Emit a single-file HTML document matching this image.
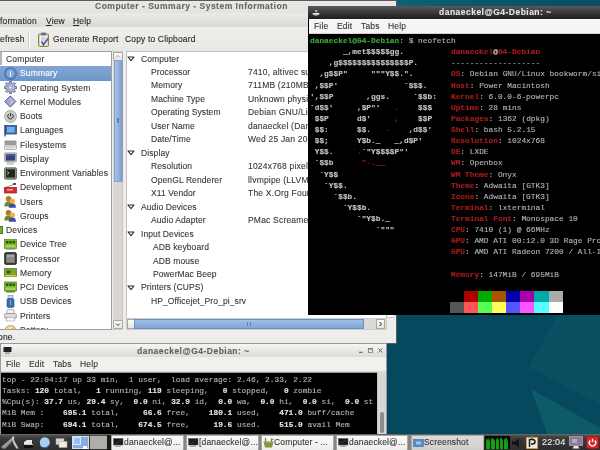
<!DOCTYPE html><html><head><meta charset="utf-8"><style>*{margin:0;padding:0;box-sizing:border-box}
html,body{width:600px;height:450px;overflow:hidden;background:#06495e;font-family:"Liberation Sans",sans-serif;font-size:8.5px;letter-spacing:0.15px;color:#2e3436;position:relative}
.a{position:absolute}
.a svg{display:block}
.t{position:absolute;white-space:pre;line-height:10px;will-change:transform;-webkit-text-stroke:0.1px currentColor}
.m{position:absolute;white-space:pre;font-family:"Liberation Mono",monospace;font-size:7.83px;letter-spacing:0;line-height:11.13px;will-change:transform;-webkit-text-stroke:0.12px currentColor}
</style></head><body>
<svg class="a" style="left:0;top:0" width="600" height="450">
 <rect width="600" height="450" fill="#06495e"/>
 <defs><linearGradient id="tg" x1="0" x2="1" y1="0" y2="0"><stop offset="0" stop-color="#0b6373"/><stop offset="0.5" stop-color="#0a5669"/><stop offset="1" stop-color="#094d63"/></linearGradient></defs>
 <rect x="396" y="0" width="204" height="7" fill="url(#tg)"/>
 <polygon points="529,367 566,300 600,300 600,404" fill="#0a5063"/>
 <polygon points="531,389 600,428 600,450 553,450" fill="#0d5b69"/>
</svg>
<div class="a" style="left:0;top:0;width:397px;height:344px;background:#5a5a5a"></div>
<div class="a" style="left:0;top:1px;width:396px;height:342px;background:#eeedeb"></div>
<div class="a" style="left:386px;top:300px;width:9px;height:18px;background:#fff;border:1px solid #c8c6c2;border-radius:2px"></div>
<div class="a" style="left:0;top:1px;width:396px;height:12px;background:linear-gradient(#e9e8e5,#e3e2df)"></div>
<div class="t" style="left:94.6px;top:0.60px;font-weight:bold;color:#66655f;letter-spacing:0.5px">Computer - Summary - System Information</div>
<div class="a" style="left:0;top:13px;width:396px;height:14px;background:linear-gradient(#eceae7,#dcdad6)"></div>
<div class="t" style="left:0px;top:15.70px;color:#262626">formation</div>
<div class="t" style="left:45.7px;top:15.7px;color:#262626"><u style="text-decoration-thickness:0.8px;text-underline-offset:1px">V</u>iew</div>
<div class="t" style="left:73px;top:15.7px;color:#262626"><u style="text-decoration-thickness:0.8px;text-underline-offset:1px">H</u>elp</div>
<div class="a" style="left:0;top:27px;width:396px;height:24px;background:linear-gradient(#efeeec,#e9e8e5)"></div>
<div class="t" style="left:-0.5px;top:34.00px;color:#262626">efresh</div>
<div class="a" style="left:28px;top:32px;width:1px;height:15px;background:#d2d0cb"></div>
<div class="a" style="left:29px;top:32px;width:1px;height:15px;background:#fbfbfa"></div>
<svg class="a" style="left:37px;top:32px" width="13" height="15" viewBox="0 0 13 15">
<rect x="1.5" y="2" width="10" height="12.5" rx="1" fill="#d9d3a8" stroke="#8a8450" stroke-width="1"/>
<rect x="3" y="3.5" width="7" height="9.5" fill="#f4f4f6"/>
<rect x="4" y="0.5" width="5" height="3" rx="1" fill="#6b6f9a"/>
<path d="M4 6h5M4 8h4" stroke="#9aa" stroke-width="0.8"/>
<path d="M4.5 9.5l2 3 4.5-6" stroke="#4a50a8" stroke-width="1.6" fill="none"/>
</svg>
<div class="t" style="left:52.7px;top:34.00px;color:#262626">Generate Report</div>
<div class="t" style="left:125px;top:34.00px;color:#262626">Copy to Clipboard</div>
<div class="a" style="left:0;top:51px;width:112px;height:279px;background:#a09e9a"></div>
<div class="a" style="left:0;top:52px;width:111px;height:277px;background:#fff"></div>
<div class="a" style="left:0;top:52px;width:2px;height:13px;background:#b8b6b0"></div>
<div class="a" style="left:0;top:52px;width:111px;height:277px;overflow:hidden">
<div class="t" style="left:6px;top:2.20px;color:#353535">Computer</div>
<div class="a" style="left:0;top:14.25px;width:112px;height:14.4px;background:linear-gradient(#84a2da,#78a1ca 50%,#6d94cd)"></div>
<div class="a" style="left:4px;top:14.95px;width:13px;height:13px"><svg width="13" height="13" viewBox="0 0 13 13"><circle cx="6.5" cy="6.5" r="5.9" fill="#5c84c0" stroke="#3e62a0" stroke-width="0.8"/><circle cx="6.5" cy="6.5" r="4.4" fill="#7fa4d8"/><rect x="5.9" y="4.2" width="1.2" height="5.6" fill="#e4f0fa"/></svg></div>
<div class="t" style="left:20px;top:16.45px;color:#fff">Summary</div>
<div class="a" style="left:4px;top:29.20px;width:13px;height:13px"><svg width="13" height="13" viewBox="0 0 13 13"><path d="M10.85 5.02 L10.99 5.51 L12.61 5.43 L12.61 7.57 L10.99 7.49 L10.63 8.53 L10.37 8.98 L11.57 10.07 L10.07 11.57 L8.98 10.37 L7.98 10.85 L7.49 10.99 L7.57 12.61 L5.43 12.61 L5.51 10.99 L4.47 10.63 L4.02 10.37 L2.93 11.57 L1.43 10.07 L2.63 8.98 L2.15 7.98 L2.01 7.49 L0.39 7.57 L0.39 5.43 L2.01 5.51 L2.37 4.47 L2.63 4.02 L1.43 2.93 L2.93 1.43 L4.02 2.63 L5.02 2.15 L5.51 2.01 L5.43 0.39 L7.57 0.39 L7.49 2.01 L8.53 2.37 L8.98 2.63 L10.07 1.43 L11.57 2.93 L10.37 4.02Z" fill="#a9aed0" stroke="#58607f" stroke-width="0.8" stroke-linejoin="round"/><circle cx="6.5" cy="6.5" r="1.1" fill="#f4f4fa"/></svg></div>
<div class="t" style="left:20px;top:30.70px;color:#353535">Operating System</div>
<div class="a" style="left:4px;top:43.45px;width:13px;height:13px"><svg width="13" height="13" viewBox="0 0 13 13"><path d="M6.3 0.9L11.9 6.5L6.3 12.1L0.7 6.5Z" fill="#a2a6d0" stroke="#474c70" stroke-width="0.9"/><path d="M6.3 2.6L10.2 6.5L6.3 10.4" fill="#b8bce0"/></svg></div>
<div class="t" style="left:20px;top:44.95px;color:#353535">Kernel Modules</div>
<div class="a" style="left:4px;top:57.70px;width:13px;height:13px"><svg width="13" height="13" viewBox="0 0 13 13"><circle cx="6.5" cy="6.5" r="5.9" fill="#d6d5d1" stroke="#8e8d89" stroke-width="0.8"/><circle cx="6.5" cy="6.5" r="4.2" fill="#c4c3bf"/><path d="M4.7 4.2A2.7 2.7 0 1 0 8.3 4.2" stroke="#3c3c3c" stroke-width="1" fill="none"/><path d="M6.5 3v3.3" stroke="#3c3c3c" stroke-width="1"/></svg></div>
<div class="t" style="left:20px;top:59.20px;color:#353535">Boots</div>
<div class="a" style="left:4px;top:71.95px;width:13px;height:13px"><svg width="13" height="13" viewBox="0 0 13 13"><rect x="1" y="1.5" width="11.5" height="8.5" fill="#3c6eaa" stroke="#24507e" stroke-width="0.8"/><rect x="3" y="3" width="7.5" height="5.5" fill="#78aee4"/><rect x="0.4" y="1" width="1.3" height="11.5" fill="#2a4e7a"/></svg></div>
<div class="t" style="left:20px;top:73.45px;color:#353535">Languages</div>
<div class="a" style="left:4px;top:86.20px;width:13px;height:13px"><svg width="13" height="13" viewBox="0 0 13 13"><rect x="0.5" y="2.5" width="12" height="4.5" rx="1" fill="#9a9a98"/><rect x="0.5" y="7" width="12" height="4.5" rx="0.8" fill="#e8e8e6" stroke="#999" stroke-width="0.7"/><rect x="2" y="8.5" width="9" height="1" fill="#bbb"/></svg></div>
<div class="t" style="left:20px;top:87.70px;color:#353535">Filesystems</div>
<div class="a" style="left:4px;top:100.45px;width:13px;height:13px"><svg width="13" height="13" viewBox="0 0 13 13"><rect x="0.5" y="0.8" width="12" height="9" rx="0.8" fill="#c4c4c8" stroke="#8a8a90" stroke-width="0.6"/><rect x="1.8" y="2" width="9.4" height="6.6" fill="#34447a"/><path d="M1.8 2h9.4v2.5Q6 3 1.8 5Z" fill="#4c5c92"/><rect x="3.5" y="10" width="6" height="2.3" fill="#d4d4d4" stroke="#999" stroke-width="0.4"/></svg></div>
<div class="t" style="left:20px;top:101.95px;color:#353535">Display</div>
<div class="a" style="left:4px;top:114.70px;width:13px;height:13px"><svg width="13" height="13" viewBox="0 0 13 13"><rect x="0.5" y="0.8" width="12" height="11.4" rx="1.2" fill="#8b8f84" stroke="#5f6358" stroke-width="0.8"/><rect x="2" y="2.3" width="9" height="8.2" fill="#1f2a1c"/><path d="M3 4.5l2 1.5-2 1.5" stroke="#d8e0d0" stroke-width="0.8" fill="none"/></svg></div>
<div class="t" style="left:20px;top:116.20px;color:#353535">Environment Variables</div>
<div class="a" style="left:4px;top:128.95px;width:13px;height:13px"><svg width="13" height="13" viewBox="0 0 13 13"><path d="M1.5 6.5L9.5 3.5" stroke="#777" stroke-width="0.8"/><rect x="9" y="2" width="3" height="2" fill="#555"/><rect x="0.5" y="6.5" width="12" height="5.5" fill="#d42c2c" stroke="#a01818" stroke-width="0.7"/><rect x="3" y="8" width="6" height="1.5" fill="#f4a0a0"/></svg></div>
<div class="t" style="left:20px;top:130.45px;color:#353535">Development</div>
<div class="a" style="left:4px;top:143.20px;width:13px;height:13px"><svg width="13" height="13" viewBox="0 0 13 13"><circle cx="4.5" cy="3.8" r="2.8" fill="#b07a2a"/><path d="M0.3 11.5c0-4 1.8-5 4.2-5s4 1 4 5z" fill="#6a8a3a"/><circle cx="8.3" cy="6" r="2.6" fill="#f0b040"/><path d="M4.8 12.8c0-3.5 1.5-4.3 3.5-4.3s3.6 0.8 3.6 4.3z" fill="#3a4ea0"/></svg></div>
<div class="t" style="left:20px;top:144.70px;color:#353535">Users</div>
<div class="a" style="left:4px;top:157.45px;width:13px;height:13px"><svg width="13" height="13" viewBox="0 0 13 13"><circle cx="4.5" cy="3.8" r="2.8" fill="#b07a2a"/><path d="M0.3 11.5c0-4 1.8-5 4.2-5s4 1 4 5z" fill="#6a8a3a"/><circle cx="8.3" cy="6" r="2.6" fill="#f0b040"/><path d="M4.8 12.8c0-3.5 1.5-4.3 3.5-4.3s3.6 0.8 3.6 4.3z" fill="#3a4ea0"/></svg></div>
<div class="t" style="left:20px;top:158.95px;color:#353535">Groups</div>
<div class="t" style="left:6px;top:173.20px;color:#353535">Devices</div>
<div class="a" style="left:0;top:173.90px;width:2.6px;height:8px;background:#7ab030;border:0.6px solid #4e7a1c;border-left:none"></div>
<div class="a" style="left:4px;top:185.95px;width:13px;height:13px"><svg width="13" height="13" viewBox="0 0 13 13"><rect x="0.5" y="1.5" width="12" height="9" fill="#78b42a" stroke="#4e8418" stroke-width="0.7"/><rect x="2" y="3" width="2.4" height="2.4" fill="#2e4e10"/><rect x="5.3" y="3" width="2.4" height="2.4" fill="#2e4e10"/><rect x="8.6" y="3" width="2.4" height="2.4" fill="#2e4e10"/><rect x="1.5" y="7" width="10" height="2.5" fill="#a4d45c"/><rect x="2" y="10.5" width="9" height="1.2" fill="#8c9a7a"/></svg></div>
<div class="t" style="left:20px;top:187.45px;color:#353535">Device Tree</div>
<div class="a" style="left:4px;top:200.20px;width:13px;height:13px"><svg width="13" height="13" viewBox="0 0 13 13"><rect x="0.6" y="0.6" width="11.8" height="11.8" rx="1.5" fill="#3c3c3c" stroke="#222" stroke-width="0.8"/><rect x="2.2" y="2.2" width="8.6" height="8.6" fill="#8a8a8a"/><rect x="3" y="3" width="7" height="2" fill="#aaa"/></svg></div>
<div class="t" style="left:20px;top:201.70px;color:#353535">Processor</div>
<div class="a" style="left:4px;top:214.45px;width:13px;height:13px"><svg width="13" height="13" viewBox="0 0 13 13"><rect x="0.5" y="2.5" width="12" height="8" fill="#76a830" stroke="#527a1a" stroke-width="0.7"/><rect x="2.5" y="4.5" width="4" height="3" fill="#3f5a1e"/><rect x="1.5" y="9" width="10" height="1.5" fill="#e0d040"/></svg></div>
<div class="t" style="left:20px;top:215.95px;color:#353535">Memory</div>
<div class="a" style="left:4px;top:228.70px;width:13px;height:13px"><svg width="13" height="13" viewBox="0 0 13 13"><rect x="0.5" y="1" width="12" height="9" fill="#78b42a" stroke="#4e8418" stroke-width="0.7"/><rect x="2" y="2.5" width="2.4" height="2.4" fill="#2e4e10"/><rect x="5.3" y="2.5" width="2.4" height="2.4" fill="#2e4e10"/><rect x="8.6" y="2.5" width="2.4" height="2.4" fill="#2e4e10"/><rect x="1.5" y="6.5" width="10" height="2.5" fill="#a4d45c"/><rect x="2" y="10" width="9" height="1.5" fill="#5a8a22"/></svg></div>
<div class="t" style="left:20px;top:230.20px;color:#353535">PCI Devices</div>
<div class="a" style="left:4px;top:242.95px;width:13px;height:13px"><svg width="13" height="13" viewBox="0 0 13 13"><rect x="4" y="0.5" width="5" height="3" fill="#c8d4e4" stroke="#7a8aa4" stroke-width="0.6"/><rect x="3" y="3.5" width="7" height="9" rx="1.5" fill="#3a6ab0" stroke="#24508e" stroke-width="0.6"/><path d="M6.5 5v5" stroke="#9cc0f0" stroke-width="0.8"/></svg></div>
<div class="t" style="left:20px;top:244.45px;color:#353535">USB Devices</div>
<div class="a" style="left:4px;top:257.20px;width:13px;height:13px"><svg width="13" height="13" viewBox="0 0 13 13"><rect x="3" y="0.8" width="7" height="4" fill="#f4f4f4" stroke="#8a8a8a" stroke-width="0.6"/><rect x="0.6" y="4.5" width="11.8" height="5" rx="1.5" fill="#dcdcdc" stroke="#8a8a8a" stroke-width="0.7"/><rect x="2.5" y="8.5" width="8" height="3.5" fill="#fafafa" stroke="#999" stroke-width="0.6"/></svg></div>
<div class="t" style="left:20px;top:258.70px;color:#353535">Printers</div>
<div class="a" style="left:4px;top:271.45px;width:13px;height:13px"><svg width="13" height="13" viewBox="0 0 13 13"><ellipse cx="6.5" cy="7" rx="5.3" ry="4.3" fill="#f4e4b0" stroke="#b48a2a" stroke-width="1"/><path d="M3.5 6.5l2.5 1.8 3.5-3" stroke="#8a6a1a" stroke-width="0.9" fill="none"/></svg></div>
<div class="t" style="left:20px;top:272.95px;color:#353535">Battery</div>
</div>
<div class="a" style="left:112px;top:51px;width:11px;height:279px;background:#cfcdc8"></div>
<div class="a" style="left:112px;top:52px;width:11px;height:277px;background:#d9d6d3;border-left:1px solid #ececea;border-right:1px solid #c8c6c1"></div>
<div class="a" style="left:113px;top:52px;width:10px;height:9px;background:linear-gradient(#fbfbfa,#e6e5e2);border:1px solid #aaa8a3;border-radius:1px"></div>
<svg class="a" style="left:115px;top:54px" width="6" height="5"><path d="M1 3.5L3 1.5L5 3.5" stroke="#c88" stroke-width="0.9" fill="none"/></svg>
<div class="a" style="left:113.5px;top:60px;width:9.5px;height:122px;background:linear-gradient(90deg,#a4c3ee,#90b1de 50%,#7d9ecb);border:1px solid #8aa0bc"></div>
<div class="a" style="left:117px;top:118px;width:2px;height:5px;border-left:1px solid #5e82b5;border-right:1px solid #5e82b5"></div>
<div class="a" style="left:113px;top:320px;width:10px;height:9px;background:linear-gradient(#fbfbfa,#e6e5e2);border:1px solid #aaa8a3;border-radius:1px"></div>
<svg class="a" style="left:115px;top:322px" width="6" height="5"><path d="M1 1.5L3 3.5L5 1.5" stroke="#333" stroke-width="0.9" fill="none"/></svg>
<div class="a" style="left:126px;top:51px;width:261px;height:268px;background:#c4c2be"></div>
<div class="a" style="left:127px;top:52px;width:259px;height:266px;background:#fff"></div>
<svg class="a" style="left:127px;top:55.70px" width="8" height="6"><path d="M1 1H7L4 4.6Z" fill="#fff" stroke="#2e2e2e" stroke-width="1.1" stroke-linejoin="round"/></svg>
<div class="t" style="left:140.6px;top:53.50px;color:#353535;letter-spacing:0.1px">Computer</div>
<div class="t" style="left:151px;top:66.97px;color:#353535;letter-spacing:0.1px">Processor</div>
<div class="t" style="left:248.2px;top:66.97px;color:#353535;letter-spacing:0.2px">7410, altivec supported</div>
<div class="t" style="left:151px;top:80.44px;color:#353535;letter-spacing:0.1px">Memory</div>
<div class="t" style="left:248.2px;top:80.44px;color:#353535;letter-spacing:0.2px">711MB (210MB used)</div>
<div class="t" style="left:151px;top:93.91px;color:#353535;letter-spacing:0.1px">Machine Type</div>
<div class="t" style="left:248.2px;top:93.91px;color:#353535;letter-spacing:0.2px">Unknown physical machine type</div>
<div class="t" style="left:151px;top:107.38px;color:#353535;letter-spacing:0.1px">Operating System</div>
<div class="t" style="left:248.2px;top:107.38px;color:#353535;letter-spacing:0.2px">Debian GNU/Linux bookworm/sid</div>
<div class="t" style="left:151px;top:120.85px;color:#353535;letter-spacing:0.1px">User Name</div>
<div class="t" style="left:248.2px;top:120.85px;color:#353535;letter-spacing:0.2px">danaeckel (Dana Eckel)</div>
<div class="t" style="left:151px;top:134.32px;color:#353535;letter-spacing:0.1px">Date/Time</div>
<div class="t" style="left:248.2px;top:134.32px;color:#353535;letter-spacing:0.2px">Wed 25 Jan 2023 10:04:17 PM</div>
<svg class="a" style="left:127px;top:149.99px" width="8" height="6"><path d="M1 1H7L4 4.6Z" fill="#fff" stroke="#2e2e2e" stroke-width="1.1" stroke-linejoin="round"/></svg>
<div class="t" style="left:140.6px;top:147.79px;color:#353535;letter-spacing:0.1px">Display</div>
<div class="t" style="left:151px;top:161.26px;color:#353535;letter-spacing:0.1px">Resolution</div>
<div class="t" style="left:248.2px;top:161.26px;color:#353535;letter-spacing:0.2px">1024x768 pixels</div>
<div class="t" style="left:151px;top:174.73px;color:#353535;letter-spacing:0.1px">OpenGL Renderer</div>
<div class="t" style="left:248.2px;top:174.73px;color:#353535;letter-spacing:0.2px">llvmpipe (LLVM 15.0.6)</div>
<div class="t" style="left:151px;top:188.20px;color:#353535;letter-spacing:0.1px">X11 Vendor</div>
<div class="t" style="left:248.2px;top:188.20px;color:#353535;letter-spacing:0.2px">The X.Org Foundation</div>
<svg class="a" style="left:127px;top:203.87px" width="8" height="6"><path d="M1 1H7L4 4.6Z" fill="#fff" stroke="#2e2e2e" stroke-width="1.1" stroke-linejoin="round"/></svg>
<div class="t" style="left:140.6px;top:201.67px;color:#353535;letter-spacing:0.1px">Audio Devices</div>
<div class="t" style="left:151px;top:215.14px;color:#353535;letter-spacing:0.1px">Audio Adapter</div>
<div class="t" style="left:248.2px;top:215.14px;color:#353535;letter-spacing:0.2px">PMac Screamer</div>
<svg class="a" style="left:127px;top:230.81px" width="8" height="6"><path d="M1 1H7L4 4.6Z" fill="#fff" stroke="#2e2e2e" stroke-width="1.1" stroke-linejoin="round"/></svg>
<div class="t" style="left:140.6px;top:228.61px;color:#353535;letter-spacing:0.1px">Input Devices</div>
<div class="t" style="left:153px;top:242.08px;color:#353535;letter-spacing:0.1px">ADB keyboard</div>
<div class="t" style="left:153px;top:255.55px;color:#353535;letter-spacing:0.1px">ADB mouse</div>
<div class="t" style="left:153px;top:269.02px;color:#353535;letter-spacing:0.1px">PowerMac Beep</div>
<svg class="a" style="left:127px;top:284.69px" width="8" height="6"><path d="M1 1H7L4 4.6Z" fill="#fff" stroke="#2e2e2e" stroke-width="1.1" stroke-linejoin="round"/></svg>
<div class="t" style="left:140.6px;top:282.49px;color:#353535;letter-spacing:0.1px">Printers (CUPS)</div>
<div class="t" style="left:151px;top:295.96px;color:#353535;letter-spacing:0.1px">HP_Officejet_Pro_pi_srv</div>
<div class="a" style="left:126px;top:318px;width:261px;height:12px;background:#cfcdc8"></div>
<div class="a" style="left:127px;top:319px;width:259px;height:10px;background:#dcdad5"></div>
<div class="a" style="left:127px;top:319px;width:8px;height:10px;background:linear-gradient(#fbfbfa,#e6e5e2);border:1px solid #aaa8a3"></div>
<div class="a" style="left:134px;top:319px;width:230px;height:10px;background:linear-gradient(#9ec0ea,#7fa6d8);border:1px solid #6a8fc0"></div>
<div class="a" style="left:247px;top:322px;width:4px;height:4px;border-left:1px solid #5e82b5;border-right:1px solid #5e82b5"></div>
<div class="a" style="left:376px;top:319px;width:9px;height:10px;background:linear-gradient(#fbfbfa,#e6e5e2);border:1px solid #aaa8a3"></div>
<svg class="a" style="left:378px;top:321px" width="5" height="6"><path d="M1.5 1L3.5 3L1.5 5" stroke="#222" stroke-width="1" fill="none"/></svg>
<div class="a" style="left:0;top:330px;width:396px;height:13px;background:#eeedeb"></div>
<div class="t" style="left:-2.5px;top:331.50px;color:#222">one.</div>
<div class="a" style="left:308px;top:6px;width:292px;height:309px;background:#000;overflow:hidden">
<div class="a" style="left:0;top:0;width:292px;height:13px;background:linear-gradient(#595959,#3c3c3c 45%,#1e1e1e)"></div>
<div class="t" style="left:130.6px;top:1px;font-weight:bold;color:#e6e6e6;letter-spacing:0.48px">danaeckel@G4-Debian: ~</div>
<svg class="a" style="left:3.5px;top:3px" width="8" height="8"><path d="M3 1 L5.5 1 L5 3.5 L3.5 3.5Z" fill="#aaa"/><rect x="0.5" y="4" width="7" height="1.8" rx="0.8" fill="#e8e8e8"/><rect x="2.5" y="6" width="3" height="1" fill="#888"/></svg>
<div class="a" style="left:1px;top:13px;width:291px;height:15px;background:#f5f5f4;border-top:1px solid #fdfdfd;border-bottom:1px solid #d4d2cd"></div>
<div class="t" style="left:6px;top:15px;color:#333">File</div>
<div class="t" style="left:28.5px;top:15px;color:#333">Edit</div>
<div class="t" style="left:53px;top:15px;color:#333">Tabs</div>
<div class="t" style="left:79.5px;top:15px;color:#333">Help</div>
<div class="m" style="left:1.5px;top:28.5px;color:#b4b4b4"><b style="color:#3aae3a">danaeckel@G4-Debian</b>:<b style="color:#000060">~</b>$ neofetch
<b style="color:#c4c4c4"><span>       _,met$$$$$gg.</span></b>          <b style="color:#aa1c1c">danaeckel</b><b style="color:#c8c8c8">@</b><b style="color:#aa1c1c">G4-Debian</b>
<b style="color:#c4c4c4"><span>    ,g$$$$$$$$$$$$$$$P.</span></b>       -------------------
<b style="color:#c4c4c4"><span>  ,g$$P&quot;     &quot;&quot;&quot;Y$$.&quot;.</span></b>        <b style="color:#aa1c1c">OS</b>: Debian GNU/Linux bookworm/sid powerpc
<b style="color:#c4c4c4"><span> ,$$P&#x27;              `$$$.</span></b>     <b style="color:#aa1c1c">Host</b>: Power Macintosh
<b style="color:#c4c4c4"><span>&#x27;,$$P       ,ggs.     `$$b:</span></b>   <b style="color:#aa1c1c">Kernel</b>: 6.0.0-6-powerpc
<b style="color:#c4c4c4"><span>`d$$&#x27;     ,$P&quot;&#x27;   </span><span style="color:#aa1c1c;font-weight:normal">.</span><span>    $$$</span></b>    <b style="color:#aa1c1c">Uptime</b>: 28 mins
<b style="color:#c4c4c4"><span> $$P      d$&#x27;     </span><span style="color:#aa1c1c;font-weight:normal">,</span><span>    $$P</span></b>    <b style="color:#aa1c1c">Packages</b>: 1362 (dpkg)
<b style="color:#c4c4c4"><span> $$:      $$.   </span><span style="color:#aa1c1c;font-weight:normal">-</span><span>    ,d$$&#x27;</span></b>    <b style="color:#aa1c1c">Shell</b>: bash 5.2.15
<b style="color:#c4c4c4"><span> $$;      Y$b._   _,d$P&#x27;</span></b>      <b style="color:#aa1c1c">Resolution</b>: 1024x768
<b style="color:#c4c4c4"><span> Y$$.    </span><span style="color:#aa1c1c;font-weight:normal">`.</span><span>`&quot;Y$$$$P&quot;&#x27;</span></b>         <b style="color:#aa1c1c">DE</b>: LXDE
<b style="color:#c4c4c4"><span> `$$b      </span><span style="color:#aa1c1c;font-weight:normal">&quot;-.__</span><span></span></b>              <b style="color:#aa1c1c">WM</b>: Openbox
<b style="color:#c4c4c4"><span>  `Y$$</span></b>                        <b style="color:#aa1c1c">WM Theme</b>: Onyx
<b style="color:#c4c4c4"><span>   `Y$$.</span></b>                      <b style="color:#aa1c1c">Theme</b>: Adwaita [GTK3]
<b style="color:#c4c4c4"><span>     `$$b.</span></b>                    <b style="color:#aa1c1c">Icons</b>: Adwaita [GTK3]
<b style="color:#c4c4c4"><span>       `Y$$b.</span></b>                 <b style="color:#aa1c1c">Terminal</b>: lxterminal
<b style="color:#c4c4c4"><span>          `&quot;Y$b._</span></b>             <b style="color:#aa1c1c">Terminal Font</b>: Monospace 10
<b style="color:#c4c4c4"><span>              `&quot;&quot;&quot;</span></b>            <b style="color:#aa1c1c">CPU</b>: 7410 (1) @ 66MHz
<b style="color:#c4c4c4"><span></span></b>                              <b style="color:#aa1c1c">GPU</b>: AMD ATI 00:12.0 3D Rage Pro 215GP
<b style="color:#c4c4c4"><span></span></b>                              <b style="color:#aa1c1c">GPU</b>: AMD ATI Radeon 7200 / All-In-Wonder
<b style="color:#c4c4c4"><span></span></b>                              
<b style="color:#c4c4c4"><span></span></b>                              <b style="color:#aa1c1c">Memory</b>: 147MiB / 695MiB</div>
<div class="a" style="left:142.00px;top:284.7px;width:14.2px;height:11.2px;background:#000000"></div>
<div class="a" style="left:156.08px;top:284.7px;width:14.2px;height:11.2px;background:#aa0000"></div>
<div class="a" style="left:170.16px;top:284.7px;width:14.2px;height:11.2px;background:#00aa00"></div>
<div class="a" style="left:184.24px;top:284.7px;width:14.2px;height:11.2px;background:#aa5500"></div>
<div class="a" style="left:198.32px;top:284.7px;width:14.2px;height:11.2px;background:#0000aa"></div>
<div class="a" style="left:212.40px;top:284.7px;width:14.2px;height:11.2px;background:#aa00aa"></div>
<div class="a" style="left:226.48px;top:284.7px;width:14.2px;height:11.2px;background:#00aaaa"></div>
<div class="a" style="left:240.56px;top:284.7px;width:14.2px;height:11.2px;background:#aaaaaa"></div>
<div class="a" style="left:142.00px;top:295.8px;width:14.2px;height:11.2px;background:#555555"></div>
<div class="a" style="left:156.08px;top:295.8px;width:14.2px;height:11.2px;background:#ff5555"></div>
<div class="a" style="left:170.16px;top:295.8px;width:14.2px;height:11.2px;background:#55ff55"></div>
<div class="a" style="left:184.24px;top:295.8px;width:14.2px;height:11.2px;background:#ffff55"></div>
<div class="a" style="left:198.32px;top:295.8px;width:14.2px;height:11.2px;background:#5555ff"></div>
<div class="a" style="left:212.40px;top:295.8px;width:14.2px;height:11.2px;background:#ff55ff"></div>
<div class="a" style="left:226.48px;top:295.8px;width:14.2px;height:11.2px;background:#55ffff"></div>
<div class="a" style="left:240.56px;top:295.8px;width:14.2px;height:11.2px;background:#ffffff"></div>
</div>
<div class="a" style="left:0;top:343px;width:387px;height:91px;background:#9a9a98"></div>
<div class="a" style="left:1px;top:344px;width:385px;height:13px;background:linear-gradient(#f6f5f3,#dddbd7)"></div>
<div class="t" style="left:137px;top:345.5px;font-weight:bold;color:#5f5e5c;letter-spacing:0.48px">danaeckel@G4-Debian: ~</div>
<svg class="a" style="left:3px;top:346px" width="9" height="9"><rect x="0.5" y="1" width="8" height="5" fill="#222"/><rect x="2" y="6.5" width="5" height="1.2" fill="#888"/></svg>
<svg class="a" style="left:356px;top:346px" width="30" height="9"><path d="M3 6.3h3.5" stroke="#666" stroke-width="1.1"/><rect x="12.5" y="2.5" width="4" height="4" fill="none" stroke="#777" stroke-width="0.8"/><path d="M12.5 2.9h4" stroke="#777" stroke-width="1.2"/><path d="M22.5 2.5l3.8 4M26.3 2.5l-3.8 4" stroke="#666" stroke-width="1"/></svg>
<div class="a" style="left:1px;top:357px;width:385px;height:15px;background:#f1f0ee;border-bottom:1px solid #dad8d3"></div>
<div class="t" style="left:6px;top:359.3px;color:#333">File</div>
<div class="t" style="left:28.5px;top:359.3px;color:#333">Edit</div>
<div class="t" style="left:53px;top:359.3px;color:#333">Tabs</div>
<div class="t" style="left:79.5px;top:359.3px;color:#333">Help</div>
<div class="a" style="left:1.3px;top:372.6px;width:375.7px;height:61.4px;background:#000;overflow:hidden">
<div class="m" style="left:1px;top:1.6px;color:#b4b4b4">top - 22:04:17 up 33 min,  1 user,  load average: 2.46, 2.33, 2.22
Tasks: <b style="color:#e8e8e8">120</b> total,   <b style="color:#e8e8e8">1</b> running, <b style="color:#e8e8e8">119</b> sleeping,   <b style="color:#e8e8e8">0</b> stopped,   <b style="color:#e8e8e8">0</b> zombie
%Cpu(s): <b style="color:#e8e8e8">37.7</b> us, <b style="color:#e8e8e8">29.4</b> sy,  <b style="color:#e8e8e8">0.0</b> ni, <b style="color:#e8e8e8">32.9</b> id,  <b style="color:#e8e8e8">0.0</b> wa,  <b style="color:#e8e8e8">0.0</b> hi,  <b style="color:#e8e8e8">0.0</b> si,  <b style="color:#e8e8e8">0.0</b> st
MiB Mem :    <b style="color:#e8e8e8">695.1</b> total,     <b style="color:#e8e8e8">66.6</b> free,    <b style="color:#e8e8e8">180.1</b> used,    <b style="color:#e8e8e8">471.0</b> buff/cache
MiB Swap:    <b style="color:#e8e8e8">694.1</b> total,    <b style="color:#e8e8e8">674.5</b> free,     <b style="color:#e8e8e8">19.6</b> used.    <b style="color:#e8e8e8">515.0</b> avail Mem</div>
</div>
<div class="a" style="left:377px;top:372px;width:9px;height:62px;background:#d8d7d3;border-left:1px solid #c8c6c1"></div>
<div class="a" style="left:379.5px;top:412px;width:4px;height:21px;background:#8d8c88;border-radius:2px"></div>
<div class="a" style="left:0;top:434px;width:600px;height:16px;background:linear-gradient(#6e6e6e 0px,#505050 1.5px,#3a3a3a 4px,#2e2e2e 100%)"></div>
<svg class="a" style="left:0px;top:436px" width="20" height="14" viewBox="0 0 20 14">
<path d="M1 11 L12.8 1 L14.5 3 L5.5 12.5 L2.5 12.5 Z" fill="#8e8e8e"/><path d="M3 11 L12.5 2.5" stroke="#bdbdbd" stroke-width="0.8"/>
<path d="M12.6 1 Q15 6.5 18.6 12.4 L16.4 12.6 Q12.6 7.5 11.8 2.2 Z" fill="#c8c8c8"/>
<circle cx="13.3" cy="1.6" r="1" fill="#e8e8e8"/>
</svg>
<svg class="a" style="left:23px;top:439px" width="11" height="10"><path d="M1 3 L4 1 H9 V5 H1Z" fill="#e8e8e8"/><rect x="1" y="5" width="9" height="4" fill="#111"/><rect x="1" y="5" width="9" height="1" fill="#ccc"/></svg>
<svg class="a" style="left:38px;top:436px" width="13" height="13"><path d="M3 3 Q5 0.5 8 1.5 Q11 2 11.5 5 Q12.5 8 10 10 Q8 12.5 5 11.5 Q2 10.5 2 7.5 Q1 5 3 3Z" fill="#a8cef0"/><path d="M4 10.5 Q7 12.8 10.5 9.8 L10 11.5 Q7 13 4.5 12Z" fill="#2a5a98"/></svg>
<svg class="a" style="left:55px;top:438px" width="13" height="11"><rect x="1" y="0.5" width="8" height="6" fill="#d8d8d8" stroke="#999" stroke-width="0.5"/><rect x="4" y="3.5" width="8" height="6" fill="#eeeee0" stroke="#aaa" stroke-width="0.5"/></svg>
<div class="a" style="left:72px;top:436px;width:17px;height:13px;background:#86aee0;border:1px solid #cfe0f4"></div>
<div class="a" style="left:73px;top:437px;width:8px;height:8px;background:#9dc0ea;border:1px solid #d8e8fa"></div>
<div class="a" style="left:83px;top:446px;width:4px;height:3px;background:#fff"></div>
<div class="a" style="left:90px;top:436px;width:17px;height:13px;background:#b0aea9"></div>
<div class="a" style="left:107px;top:435px;width:4px;height:15px;background:#1a1a1a"></div>
<div class="a" style="left:111px;top:435px;width:373px;height:15px;background:#858585"></div>
<div class="a" style="left:111px;top:435px;width:73px;height:15px;background:linear-gradient(#fafaf9,#efeeec);border:1px solid #a9a8a4;border-bottom:none;border-radius:1px"></div>
<svg class="a" style="left:113px;top:438px" width="11" height="10"><rect x="0.5" y="0.5" width="9.5" height="6.5" fill="#1a1a1a" stroke="#555" stroke-width="0.5"/><path d="M2 6 L8 2" stroke="#555" stroke-width="0.5"/><rect x="2" y="7.5" width="6" height="1.3" fill="#999"/></svg>
<div class="t" style="left:124px;top:436.8px;color:#333">danaeckel@...</div>
<div class="a" style="left:186px;top:435px;width:73px;height:15px;background:linear-gradient(#fafaf9,#efeeec);border:1px solid #a9a8a4;border-bottom:none;border-radius:1px"></div>
<svg class="a" style="left:188px;top:438px" width="11" height="10"><rect x="0.5" y="0.5" width="9.5" height="6.5" fill="#1a1a1a" stroke="#555" stroke-width="0.5"/><path d="M2 6 L8 2" stroke="#555" stroke-width="0.5"/><rect x="2" y="7.5" width="6" height="1.3" fill="#999"/></svg>
<div class="t" style="left:199px;top:436.8px;color:#333">[danaeckel@...</div>
<div class="a" style="left:261px;top:435px;width:73px;height:15px;background:linear-gradient(#fafaf9,#efeeec);border:1px solid #a9a8a4;border-bottom:none;border-radius:1px"></div>
<svg class="a" style="left:263px;top:437px" width="11" height="11"><path d="M0.5 4.5 H10.5 L9 10.5 H2Z" fill="#7e9a3a"/><path d="M1.5 5 H9.5" stroke="#a8c060" stroke-width="1"/><path d="M2.5 4.5 V1 M8.5 4.5 V1.5 M8.5 2 L10.5 2.5" stroke="#6a6a7a" stroke-width="1.2"/></svg>
<div class="t" style="left:274px;top:436.8px;color:#333">Computer - ...</div>
<div class="a" style="left:336px;top:435px;width:72px;height:15px;background:linear-gradient(#fafaf9,#efeeec);border:1px solid #a9a8a4;border-bottom:none;border-radius:1px"></div>
<svg class="a" style="left:338px;top:438px" width="11" height="10"><rect x="0.5" y="0.5" width="9.5" height="6.5" fill="#1a1a1a" stroke="#555" stroke-width="0.5"/><path d="M2 6 L8 2" stroke="#555" stroke-width="0.5"/><rect x="2" y="7.5" width="6" height="1.3" fill="#999"/></svg>
<div class="t" style="left:349px;top:436.8px;color:#333">danaeckel@...</div>
<div class="a" style="left:411px;top:435px;width:73px;height:15px;background:linear-gradient(#dddcd9,#d0cfcc);border:1px solid #a9a8a4;border-bottom:none;border-radius:1px"></div>
<svg class="a" style="left:413px;top:438px" width="11" height="10"><rect x="0.5" y="1.5" width="10" height="7" fill="#5a8cc8" stroke="#3a6aa8" stroke-width="0.6"/><rect x="3" y="3.5" width="5" height="3" fill="#9cc4f0"/></svg>
<div class="t" style="left:424px;top:436.8px;color:#333">Screenshot</div>
<div class="a" style="left:485px;top:436px;width:25px;height:13px;background:#050805"></div>
<svg class="a" style="left:485px;top:436px" width="25" height="13"><path d="M1 13V4 L2 2 L3 5 L4 1 L5 6 V13Z M6 13V3 L7 1 L8 4 L9 2 L10 6V13Z M11 13V2 L12 4 L13 1 L14 5V13Z M15 13V3 L16 1 L17 3 L18 5 V13Z M19 13V2 L20 4 L21 1 L22 3 L23 6 V13Z" fill="#159e15"/></svg>
<svg class="a" style="left:510px;top:437px" width="15" height="12"><path d="M2 4.5 H5 L9 1.5 V10.5 L5 7.5 H2Z" fill="#111"/><path d="M10.5 4 Q12 6 10.5 8" stroke="#222" stroke-width="0.8" fill="none"/></svg>
<svg class="a" style="left:526px;top:436px" width="12" height="13"><rect x="0.5" y="1.5" width="11" height="11" fill="#f2eadc" stroke="#c89a5a" stroke-width="1"/><circle cx="6" cy="1.5" r="1.5" fill="#3cc060"/><path d="M3.5 11 V3.5 H6.5 Q9 3.5 9 5.8 Q9 8 6.5 8 H5" stroke="#1a1a1a" stroke-width="1.5" fill="none"/></svg>
<div class="t" style="left:542px;top:436.6px;color:#f0f0f0;font-size:9px;letter-spacing:0.2px">22:04</div>
<svg class="a" style="left:569px;top:436px" width="14" height="13"><rect x="0.5" y="0.5" width="13" height="9" fill="#8c7a96" stroke="#b0a4b8" stroke-width="0.8"/><rect x="3" y="3" width="5" height="4" fill="#b8a8c0"/><path d="M5 10 H9 L10.5 12.5 H3.5Z" fill="#e8e8e8"/></svg>
<svg class="a" style="left:586px;top:436px" width="13" height="13"><rect x="0.5" y="0.5" width="12" height="12" rx="1.5" fill="#d42a2a" stroke="#a01818" stroke-width="0.7"/><path d="M4.2 4.5 A3.2 3.2 0 1 0 8.8 4.5" stroke="#fff" stroke-width="1.3" fill="none"/><path d="M6.5 2.8 V6" stroke="#fff" stroke-width="1.3"/></svg>
</body></html>
